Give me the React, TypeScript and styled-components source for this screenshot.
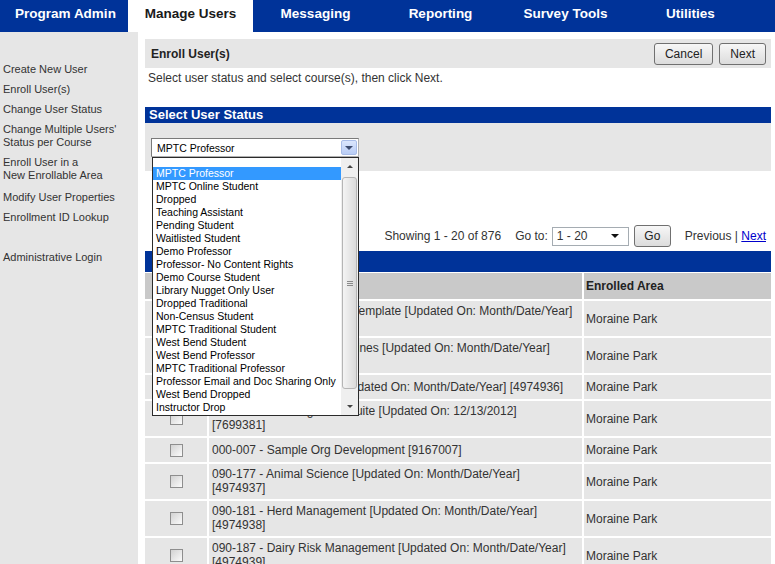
import styled, { createGlobalStyle } from 'styled-components';

const GlobalStyle = createGlobalStyle`
  html, body {
    margin: 0;
    padding: 0;
    background: #fff;
  }
  body {
    font-family: "Liberation Sans", Arial, sans-serif;
    overflow: hidden;
  }
`;

const Page = styled.div`
  width: 775px;
  height: 564px;
  overflow: hidden;
  display: flex;
  flex-direction: column;
`;

const NavBar = styled.nav`
  height: 32px;
  flex-shrink: 0;
  display: flex;
  padding-left: 3px;
  background: #003399;
`;

const NavTab = styled.div<{ $active?: boolean }>`
  width: 125px;
  display: flex;
  align-items: center;
  justify-content: center;
  padding-bottom: 5px;
  box-sizing: border-box;
  font-size: 13.5px;
  font-weight: bold;
  color: ${(p) => (p.$active ? '#1a1a1a' : '#fff')};
  background: ${(p) => (p.$active ? '#fff' : 'transparent')};
`;

const Body = styled.div`
  flex: 1;
  display: flex;
  min-height: 0;
`;

const Sidebar = styled.aside`
  width: 138px;
  flex-shrink: 0;
  box-sizing: border-box;
  padding: 31px 0 0 3px;
  background: #e6e6e6;
  display: flex;
  flex-direction: column;
  gap: 7px;
`;

const SideLink = styled.div<{ $gapBefore?: number }>`
  font-size: 11px;
  line-height: 13px;
  color: #333;
  margin-top: ${(p) => p.$gapBefore ?? 0}px;
`;

const Main = styled.main`
  width: 626px;
  margin-left: 7px;
  padding-top: 7px;
`;

const HeaderBar = styled.div`
  height: 29px;
  display: flex;
  align-items: center;
  justify-content: space-between;
  padding: 0 5px 0 6px;
  background: #e6e6e6;
`;

const HeaderTitle = styled.div`
  font-size: 12px;
  font-weight: bold;
  color: #222;
`;

const ButtonRow = styled.div`
  display: flex;
  gap: 6px;
`;

const Button = styled.button`
  height: 22px;
  padding: 0 10px;
  border: 1px solid #707070;
  border-radius: 3px;
  background: linear-gradient(#f7f7f7, #dcdcdc);
  font-family: "Liberation Sans", Arial, sans-serif;
  font-size: 12px;
  color: #222;
`;

const Instruction = styled.p`
  margin: 0 0 22px;
  padding: 3px 0 0 3px;
  font-size: 12px;
  line-height: 14px;
  color: #333;
`;

const SectionBar = styled.div`
  height: 16px;
  padding-left: 4px;
  background: #003399;
  color: #fff;
  font-size: 13px;
  font-weight: bold;
  line-height: 16px;
`;

const StatusBody = styled.div`
  position: relative;
  height: 48px;
  box-sizing: border-box;
  padding: 15px 0 0 6px;
  background: #e6e6e6;
`;

const SelectBox = styled.div`
  width: 208px;
  height: 19px;
  box-sizing: border-box;
  display: flex;
  align-items: center;
  justify-content: space-between;
  padding: 0 1px 0 5px;
  border: 1px solid #7a7a7a;
  border-right-color: #b0b0b0;
  border-bottom-color: #b0b0b0;
  background: #fff;
  font-size: 10.5px;
  color: #000;
`;

const SelectArrow = styled.span`
  width: 16px;
  height: 15px;
  box-sizing: border-box;
  display: flex;
  align-items: center;
  justify-content: center;
  border: 1px solid #a9bde8;
  border-radius: 2px;
  background: linear-gradient(#dbe6fc, #b9cdf6);

  &::after {
    content: '';
    border-left: 4px solid transparent;
    border-right: 4px solid transparent;
    border-top: 4px solid #3c4b6e;
  }
`;

const DropList = styled.div`
  position: absolute;
  top: 34px;
  left: 7px;
  width: 207px;
  height: 259px;
  box-sizing: border-box;
  display: flex;
  border: 1px solid #2b2b2b;
  background: #fff;
  z-index: 5;
`;

const Options = styled.div`
  flex: 1;
  padding-top: 9px;
`;

const Option = styled.div<{ $selected?: boolean }>`
  height: 13px;
  padding-left: 3px;
  font-size: 10.5px;
  line-height: 13px;
  white-space: nowrap;
  color: ${(p) => (p.$selected ? '#fff' : '#000')};
  background: ${(p) => (p.$selected ? '#3399ff' : 'transparent')};
`;

const ScrollBar = styled.div`
  width: 17px;
  display: flex;
  flex-direction: column;
  background: #efefef;
`;

const ScrollButton = styled.div<{ $down?: boolean }>`
  height: 17px;
  display: flex;
  align-items: center;
  justify-content: center;

  &::after {
    content: '';
    border-left: 3px solid transparent;
    border-right: 3px solid transparent;
    ${(p) =>
      p.$down ? 'border-top: 3px solid #444;' : 'border-bottom: 3px solid #444;'}
  }
`;

const ScrollTrack = styled.div`
  flex: 1;
  padding: 2px 1px 9px;
  display: flex;
`;

const Thumb = styled.div`
  flex: 1;
  display: flex;
  flex-direction: column;
  align-items: center;
  justify-content: center;
  gap: 1px;
  border: 1px solid #b5b5b5;
  border-radius: 3px;
  background: linear-gradient(90deg, #f4f4f4, #dadada);
`;

const Grip = styled.span`
  width: 6px;
  height: 1px;
  background: #8a8a8a;
`;

const Pager = styled.div`
  height: 22px;
  margin-top: 54px;
  padding-right: 5px;
  display: flex;
  align-items: center;
  justify-content: flex-end;
  font-size: 12px;
  color: #333;
`;

const PagerText = styled.span<{ $gap?: number }>`
  margin-left: ${(p) => p.$gap ?? 0}px;
`;

const PageSelect = styled.div`
  width: 77px;
  height: 19px;
  margin-left: 4px;
  box-sizing: border-box;
  display: flex;
  align-items: center;
  justify-content: space-between;
  padding: 0 9px 0 4px;
  border: 1px solid #a5acb2;
  background: #fff;
  color: #333;

  &::after {
    content: '';
    border-left: 4px solid transparent;
    border-right: 4px solid transparent;
    border-top: 4px solid #111;
  }
`;

const GoButton = styled(Button)`
  width: 37px;
  padding: 0;
  margin-left: 5px;
`;

const Link = styled.a`
  color: #0000cc;
  text-decoration: underline;
`;

const TableBar = styled.div`
  height: 21px;
  margin-top: 4px;
  border-bottom: 1px solid #fff;
  background: #003399;
`;

const Table = styled.table`
  width: 626px;
  table-layout: fixed;
  border-collapse: separate;
  border-spacing: 0;
  font-size: 12px;
  line-height: 14px;
  color: #333;

  td,
  th {
    border-bottom: 2px solid #fff;
    box-sizing: border-box;
  }
  td + td,
  th + th {
    border-left: 2px solid #fff;
  }
`;

const HeadCell = styled.th`
  padding: 6px 2px;
  background: #c9c9c9;
  text-align: left;
  font-weight: bold;
  color: #222;
`;

const CheckCell = styled.td`
  background: #e6e6e6;
  text-align: center;
  vertical-align: middle;
`;

const CourseCell = styled.td`
  padding: 3px 3px 4px;
  background: #e6e6e6;
  vertical-align: middle;
`;

const AreaCell = styled.td`
  padding: 5px 2px;
  background: #e6e6e6;
  vertical-align: middle;
`;

const CheckBox = styled.input.attrs({ type: 'checkbox' })`
  appearance: none;
  display: block;
  width: 13px;
  height: 13px;
  margin: 0 auto;
  border: 1px solid #8e8e8e;
  background: linear-gradient(135deg, #d2d2d2, #fbfbfb);
`;

const tabs = ['Program Admin', 'Manage Users', 'Messaging', 'Reporting', 'Survey Tools', 'Utilities'];

const sideLinks: { lines: string[]; gap?: number }[] = [
  { lines: ['Create New User'] },
  { lines: ['Enroll User(s)'] },
  { lines: ['Change User Status'] },
  { lines: ["Change Multiple Users'", 'Status per Course'] },
  { lines: ['Enroll User in a', 'New Enrollable Area'] },
  { lines: ['Modify User Properties'], gap: 2 },
  { lines: ['Enrollment ID Lookup'] },
  { lines: ['Administrative Login'], gap: 20 },
];

const statuses = [
  'MPTC Professor',
  'MPTC Online Student',
  'Dropped',
  'Teaching Assistant',
  'Pending Student',
  'Waitlisted Student',
  'Demo Professor',
  'Professor- No Content Rights',
  'Demo Course Student',
  'Library Nugget Only User',
  'Dropped Traditional',
  'Non-Census Student',
  'MPTC Traditional Student',
  'West Bend Student',
  'West Bend Professor',
  'MPTC Traditional Professor',
  'Professor Email and Doc Sharing Only',
  'West Bend Dropped',
  'Instructor Drop',
];

const courses: string[][] = [
  ['000-001 - Sample Course Template [Updated On: Month/Date/Year]', '[4974934]'],
  ['000-002 - Academic Guidelines [Updated On: Month/Date/Year]', '[4974935]'],
  ['000-003 - Course Shell [Updated On: Month/Date/Year] [4974936]'],
  ['000-006 - Learning Tools Suite [Updated On: 12/13/2012]', '[7699381]'],
  ['000-007 - Sample Org Development [9167007]'],
  ['090-177 - Animal Science [Updated On: Month/Date/Year]', '[4974937]'],
  ['090-181 - Herd Management [Updated On: Month/Date/Year]', '[4974938]'],
  ['090-187 - Dairy Risk Management [Updated On: Month/Date/Year]', '[4974939]'],
];

export default function App() {
  return (
    <Page>
      <GlobalStyle />
      <NavBar>
        {tabs.map((t) => (
          <NavTab key={t} $active={t === 'Manage Users'}>
            {t}
          </NavTab>
        ))}
      </NavBar>
      <Body>
        <Sidebar>
          {sideLinks.map((l) => (
            <SideLink key={l.lines[0]} $gapBefore={l.gap}>
              {l.lines.map((line, i) => (
                <div key={i}>{line}</div>
              ))}
            </SideLink>
          ))}
        </Sidebar>
        <Main>
          <HeaderBar>
            <HeaderTitle>Enroll User(s)</HeaderTitle>
            <ButtonRow>
              <Button>Cancel</Button>
              <Button>Next</Button>
            </ButtonRow>
          </HeaderBar>
          <Instruction>Select user status and select course(s), then click Next.</Instruction>
          <SectionBar>Select User Status</SectionBar>
          <StatusBody>
            <SelectBox>
              MPTC Professor
              <SelectArrow />
            </SelectBox>
            <DropList>
              <Options>
                {statuses.map((s, i) => (
                  <Option key={s} $selected={i === 0}>
                    {s}
                  </Option>
                ))}
              </Options>
              <ScrollBar>
                <ScrollButton />
                <ScrollTrack>
                  <Thumb>
                    <Grip />
                    <Grip />
                    <Grip />
                  </Thumb>
                </ScrollTrack>
                <ScrollButton $down />
              </ScrollBar>
            </DropList>
          </StatusBody>
          <Pager>
            <PagerText>Showing 1 - 20 of 876</PagerText>
            <PagerText $gap={14}>Go to:</PagerText>
            <PageSelect>1 - 20</PageSelect>
            <GoButton>Go</GoButton>
            <PagerText $gap={14}>
              Previous | <Link href="#">Next</Link>
            </PagerText>
          </Pager>
          <TableBar />
          <Table>
            <colgroup>
              <col style={{ width: 62 }} />
              <col style={{ width: 375 }} />
              <col style={{ width: 189 }} />
            </colgroup>
            <thead>
              <tr>
                <HeadCell />
                <HeadCell />
                <HeadCell>Enrolled Area</HeadCell>
              </tr>
            </thead>
            <tbody>
              {courses.map((c) => (
                <tr key={c[0]}>
                  <CheckCell>
                    <CheckBox />
                  </CheckCell>
                  <CourseCell>
                    {c.map((line, i) => (
                      <div key={i}>{line}</div>
                    ))}
                  </CourseCell>
                  <AreaCell>Moraine Park</AreaCell>
                </tr>
              ))}
            </tbody>
          </Table>
        </Main>
      </Body>
    </Page>
  );
}
